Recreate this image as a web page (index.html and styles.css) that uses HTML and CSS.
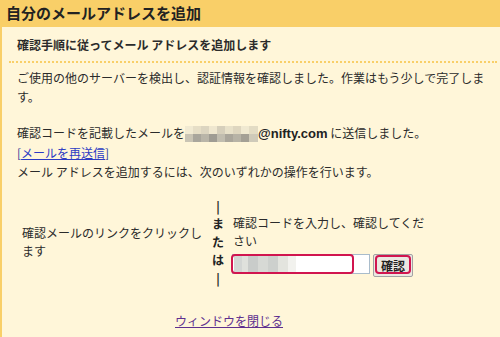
FILE: index.html
```html
<!DOCTYPE html>
<html lang="ja">

<head>
    <meta charset="UTF-8">
    <title>自分のメールアドレスを追加</title>
    <link rel="stylesheet" href="styles.css">
</head>

<body>
    <div class="header">自分のメールアドレスを追加</div>

    <div class="panel">
        <div class="subtitle">確認手順に従ってメール アドレスを追加します</div>

        <div class="content">
            <p class="para">ご使用の他のサーバーを検出し、認証情報を確認しました。作業はもう少しで完了します。</p>

            <p class="para">
                確認コードを記載したメールを<span class="mosaic"></span><b class="mail">@nifty.com</b> に送信しました。<br>
                <span class="bracket">[</span><a href="#" class="resend">メールを再送信</a><span class="bracket">]</span><br>
                メール アドレスを追加するには、次のいずれかの操作を行います。
            </p>
        </div>

        <div class="choice">
            <div class="option-left">確認メールのリンクをクリックします</div>
            <div class="or">
                <span>|</span>
                <span>ま</span>
                <span>た</span>
                <span>は</span>
                <span>|</span>
            </div>
            <div class="option-right">
                <div>確認コードを入力し、確認してください</div>
                <div class="code-row">
                    <div class="code-box">
                        <span class="code-blur"></span>
                        <span class="mark mark-input"></span>
                    </div>
                    <div class="btn-wrap">
                        <button class="btn">確認</button>
                        <span class="mark mark-btn"></span>
                    </div>
                </div>
            </div>
        </div>

        <div class="close-row">
            <a href="#" class="close">ウィンドウを閉じる</a>
        </div>
    </div>
</body>

</html>
```

FILE: styles.css
```css
* {
    box-sizing: border-box;
}

html,
body {
    height: 100%;
}

body {
    margin: 0;
    background-color: #fff6d9;
    font-family: "Noto Sans CJK JP", "Noto Sans", sans-serif;
    font-size: 12px;
    color: #2b2b2b;
    overflow: hidden;
}

.header {
    height: 27px;
    background-color: #f9cf68;
    padding-left: 6px;
    font-size: 15px;
    font-weight: bold;
    line-height: 25px;
    color: #222;
}

.panel {
    height: 310px;
    border-left: 2px solid #f9cf68;
    padding: 0 3px 0 7px;
}

.subtitle {
    font-weight: bold;
    line-height: 19px;
    padding: 8px 0 7px 8px;
    border-bottom: 2px dotted #f9cf68;
}

.content {
    padding: 0 0 0 8px;
}

.para {
    margin: 5px 0 0;
    line-height: 19px;
}

.para + .para {
    margin-top: 17px;
}

.mosaic {
    display: inline-block;
    width: 73px;
    height: 16px;
    vertical-align: -4px;
    background:
        linear-gradient(90deg, #f1ead2 0 8px, #e6dec6 8px 16px, #dcd5c0 16px 24px, #efe7cf 24px 32px, #d6cfbb 32px 40px, #e8e1c9 40px 48px, #ded6bf 48px 56px, #f0e9d1 56px 64px, #e3dcc4 64px 73px) top / 100% 8px no-repeat,
        linear-gradient(90deg, #c9c4b4 0 8px, #a9a69c 8px 16px, #b9b5a8 16px 24px, #9f9c93 24px 32px, #c1bdaf 32px 40px, #aaa69b 40px 48px, #b7b3a6 48px 56px, #a4a095 56px 64px, #cfcab9 64px 73px) bottom / 100% 8px no-repeat;
}

.mail {
    font-family: "Liberation Sans", sans-serif;
    font-size: 13px;
    color: #222;
}

.bracket {
    color: #2a3a9a;
}

.resend {
    color: #2c3bc4;
}

.choice {
    display: grid;
    grid-template-columns: 202px 14px 204px;
    margin-top: 16px;
}

.option-left {
    align-self: center;
    padding: 0 8px 0 13px;
    line-height: 18px;
}

.or {
    display: flex;
    flex-direction: column;
    align-items: center;
    font-weight: bold;
    line-height: 18px;
    color: #222;
}

.or span {
    height: 18px;
}

.option-right {
    padding: 17px 2px 0 8px;
    line-height: 18px;
}

.code-row {
    display: flex;
    align-items: flex-start;
    gap: 3px;
    margin-top: 4px;
}

.code-box {
    position: relative;
    width: 138px;
    height: 20px;
    background-color: #fff;
    border: 1px solid #a9bccb;
    margin-left: -1px;
}

.code-blur {
    display: block;
    width: 62px;
    height: 16px;
    margin: 1px 0 0 1px;
    background: linear-gradient(90deg, #d3d6d4 0 8px, #dfe1dc 8px 14px, #c9ccca 14px 24px, #d7d9d5 24px 34px, #cdd0cd 34px 44px, #e3e4de 44px 54px, #f2f2ee 54px 62px);
}

.mark {
    position: absolute;
    border: 2px solid #d1154f;
    border-radius: 4px;
    pointer-events: none;
}

.mark-input {
    left: -2px;
    top: -1px;
    width: 123px;
    height: 20px;
}

.btn-wrap {
    position: relative;
}

.btn {
    display: block;
    width: 40px;
    height: 23px;
    padding: 0;
    font-family: "Noto Sans CJK JP", sans-serif;
    font-size: 12px;
    font-weight: bold;
    color: #222;
    background-color: #ebe8e2;
    border: 1px solid #a3a3a3;
    border-radius: 2px;
}

.mark-btn {
    left: 2px;
    top: 1px;
    width: 36px;
    height: 19px;
}

.close-row {
    margin-top: 24px;
    padding-left: 166px;
    line-height: 19px;
}

.close {
    color: #5e2f8f;
}
```
